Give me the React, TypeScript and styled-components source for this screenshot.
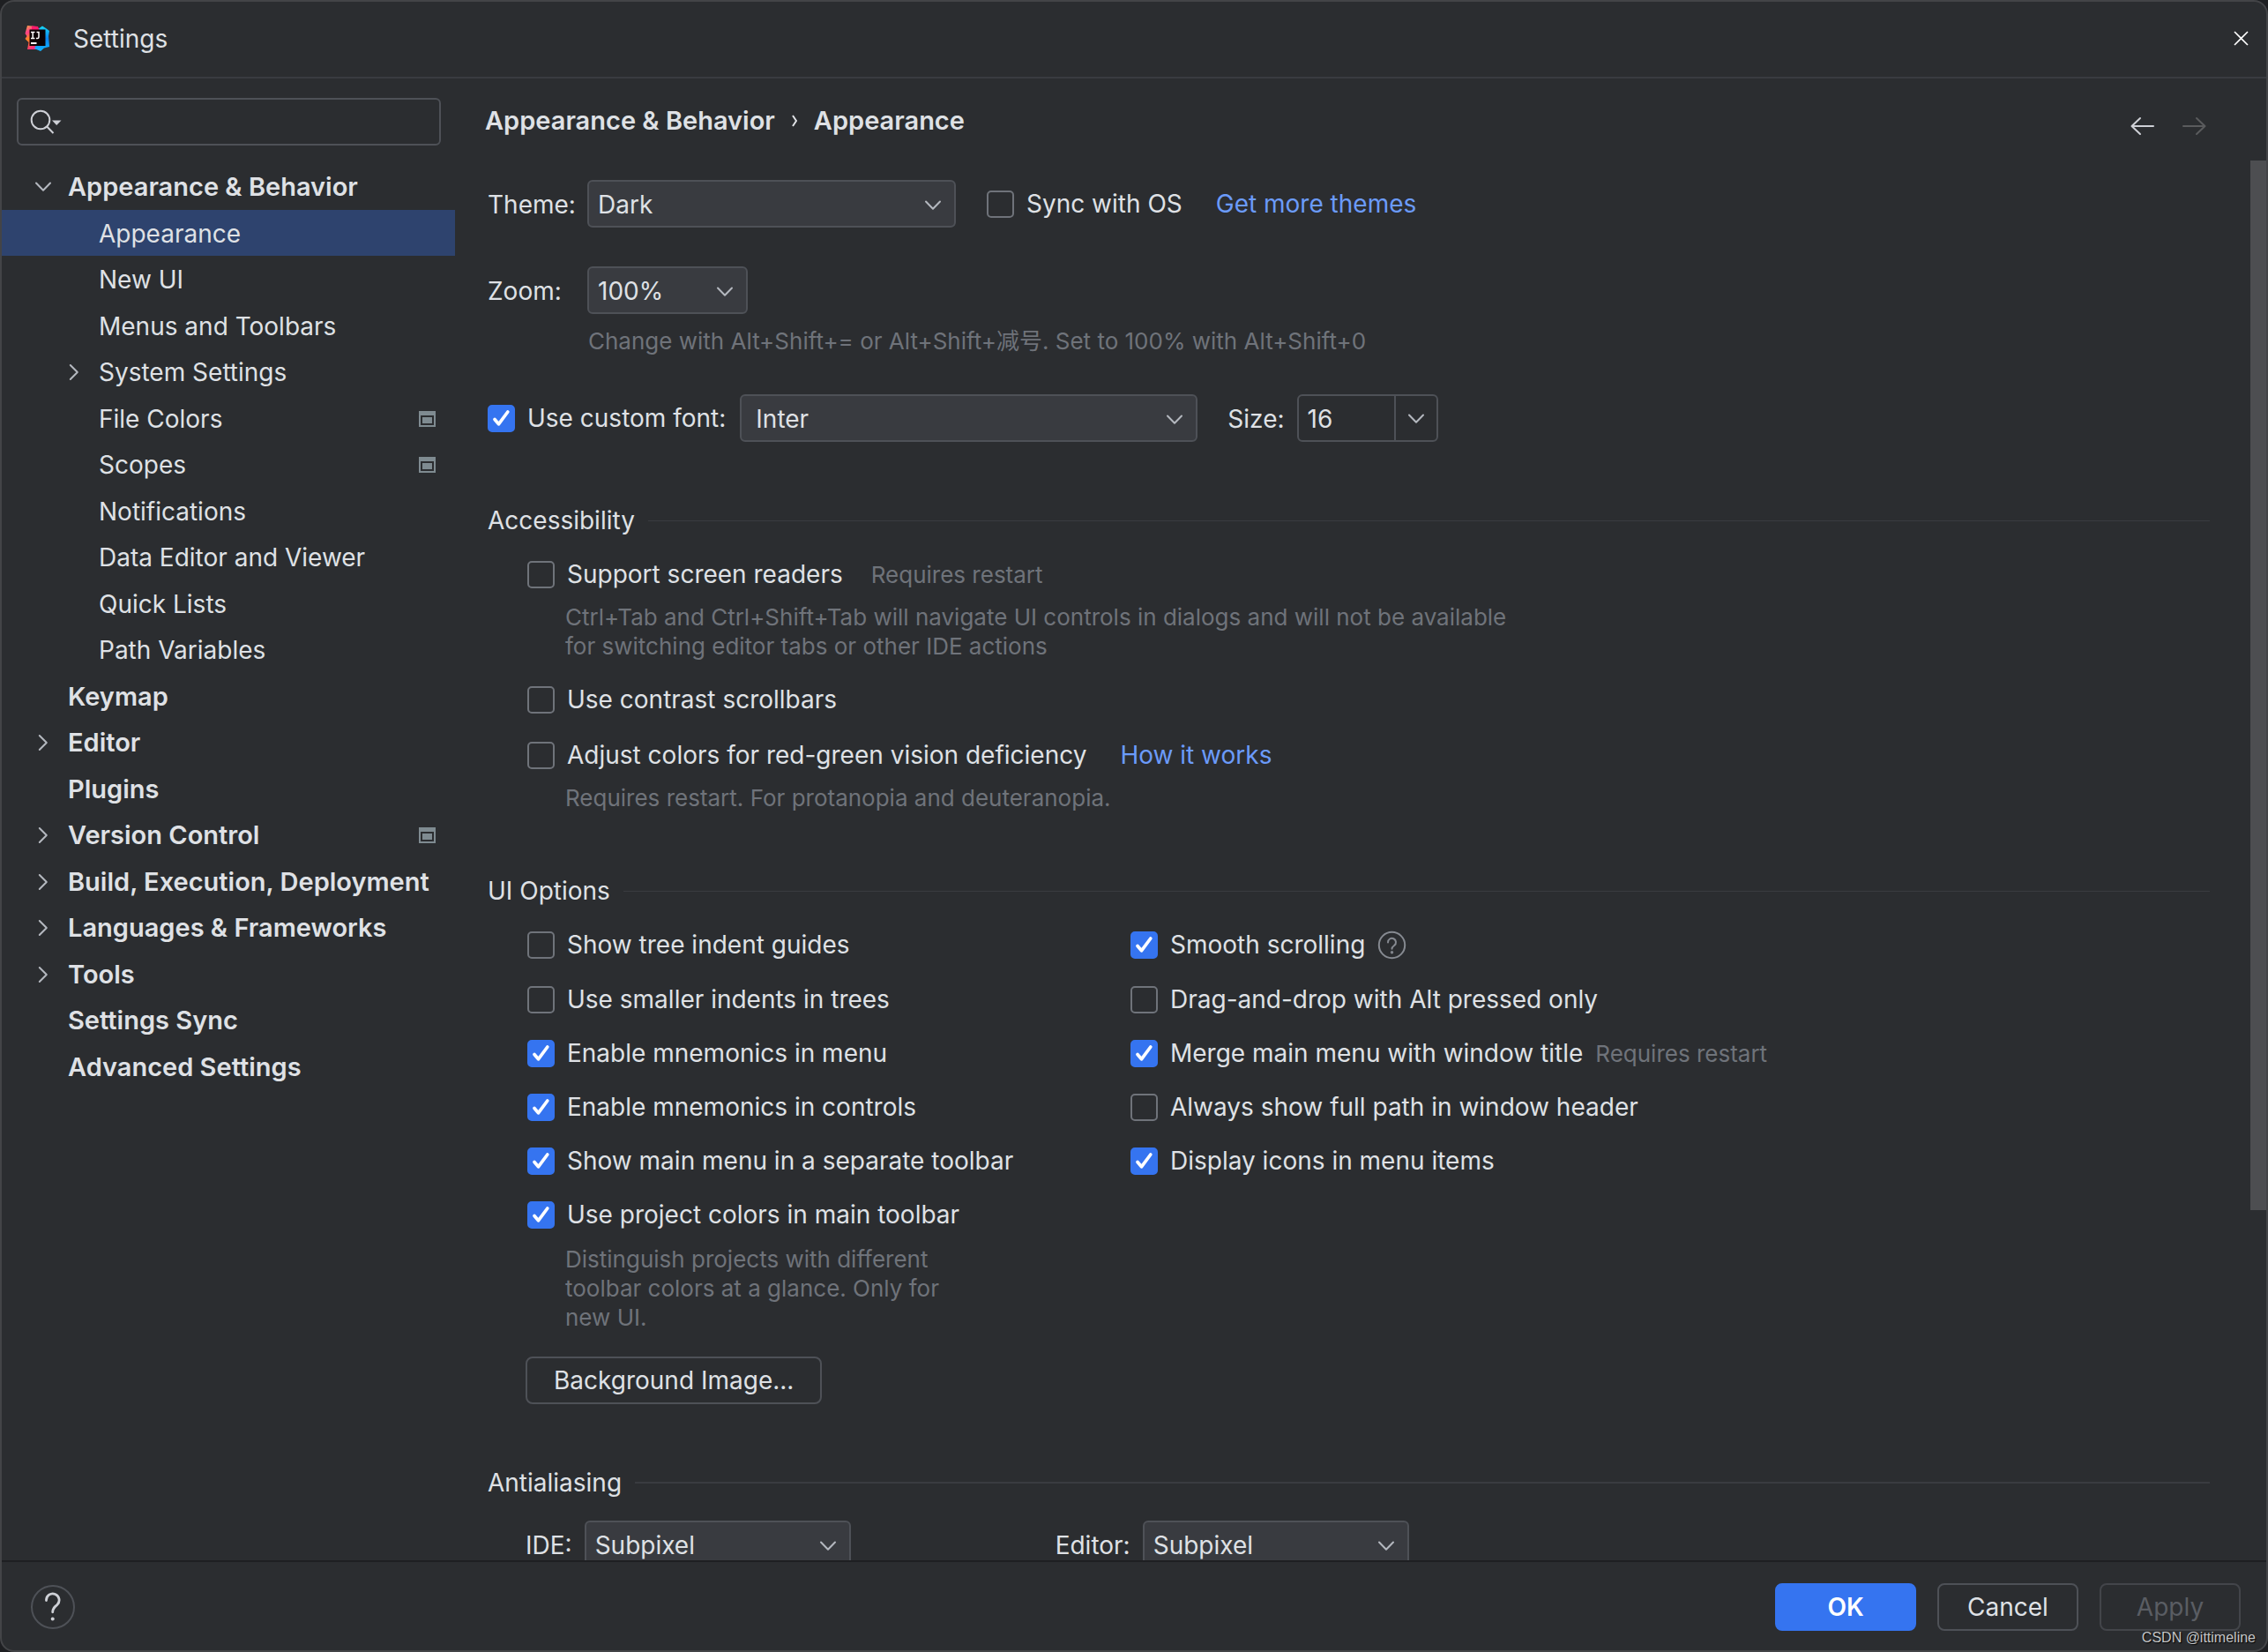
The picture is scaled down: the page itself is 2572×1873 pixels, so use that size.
import React, { useState } from "react";
import styled, { createGlobalStyle, css } from "styled-components";

const c = {
  bg: "#2b2d30",
  field: "#393b40",
  border: "#4e5157",
  frame: "#434447",
  line: "#393b40",
  text: "#dfe1e5",
  hint: "#6f737a",
  icon: "#ced0d6",
  accent: "#3574f0",
  link: "#6b9bfa",
  selected: "#2e436e",
};

const Global = createGlobalStyle`
  *, *::before, *::after { box-sizing: border-box; }
  body { margin: 0; background: #1e1f22; }
  body, button, input, select {
    font-family: Inter, "Noto Sans CJK SC", sans-serif;
    font-size: 28px;
    line-height: 34px;
    font-optical-sizing: none;
    color: ${c.text};
  }
  button, input, select { margin: 0; padding: 0; }
`;

/* ---------- window frame ---------- */

const Window = styled.div`
  display: flex;
  flex-direction: column;
  height: 100vh;
  background: ${c.bg};
  border: 2px solid ${c.frame};
  border-radius: 16px;
  overflow: hidden;
`;

const TitleBar = styled.header`
  display: flex;
  align-items: center;
  flex: none;
  height: 87px;
  padding: 0 20px 2px 26px;
  border-bottom: 2px solid ${c.line};
`;

const Title = styled.h1`
  flex: 1;
  margin: 0 0 0 26px;
  font-size: 28px;
  font-weight: 400;
`;

const IconButton = styled.button`
  display: flex;
  flex: none;
  background: none;
  border: 0;
`;

const Body = styled.div`
  display: flex;
  flex: 1;
  min-height: 0;
`;

/* ---------- sidebar ---------- */

const Sidebar = styled.nav`
  display: flex;
  flex-direction: column;
  flex: none;
  width: 514px;
`;

const SearchBox = styled.div`
  display: flex;
  align-items: center;
  height: 54px;
  margin: 22px 16px 20px 17px;
  padding-left: 13px;
  border: 2px solid ${c.border};
  border-radius: 6px;
`;

const SearchInput = styled.input`
  flex: 1;
  min-width: 0;
  margin-left: 8px;
  background: none;
  border: 0;
  outline: none;
`;

const Tree = styled.ul`
  display: grid;
  grid-auto-rows: 1fr;
  height: 1050px;
  margin: 0;
  padding: 0;
  list-style: none;
`;

const TreeRow = styled.li<{ $child?: boolean; $selected?: boolean }>`
  display: flex;
  align-items: center;
  padding: 2px 22px 0 ${(p) => (p.$child ? 70 : 35)}px;
  font-size: ${(p) => (p.$child ? 28 : 29)}px;
  font-weight: ${(p) => (p.$child ? 400 : 600)};
  background: ${(p) => (p.$selected ? c.selected : "none")};
`;

const TreeArrow = styled.span`
  display: flex;
  justify-content: center;
  width: 24px;
  margin-right: 16px;
`;

const TreeLabel = styled.span`
  flex: 1;
  white-space: nowrap;
`;

/* ---------- content ---------- */

const Content = styled.main`
  display: flex;
  flex-direction: column;
  flex: 1;
  min-width: 0;
`;

const ContentHeader = styled.div`
  display: flex;
  align-items: flex-start;
  flex: none;
  height: 93px;
  padding: 31px 68px 0 34px;
`;

const Breadcrumb = styled.h2`
  display: flex;
  align-items: center;
  flex: 1;
  gap: 18px;
  margin: 0;
  font-size: 29px;
  font-weight: 600;
`;

const NavButtons = styled.div`
  display: flex;
  gap: 30px;
  margin-top: 12px;
`;

const Viewport = styled.div`
  display: flex;
  flex: 1;
  min-height: 0;
  overflow: hidden;
`;

const Page = styled.div`
  flex: 1;
  min-width: 0;
  padding: 22px 46px 0 37px;
`;

const ScrollThumb = styled.div`
  flex: none;
  width: 18px;
  height: 75%;
  background: #4d4e51;
`;

const Row = styled.div<{ $top?: number; $indent?: number }>`
  display: flex;
  align-items: center;
  margin-top: ${(p) => p.$top ?? 0}px;
  padding-left: ${(p) => p.$indent ?? 0}px;
  white-space: nowrap;
`;

const FieldLabel = styled.label<{ $width?: number }>`
  flex: none;
  width: ${(p) => (p.$width ? `${p.$width}px` : "auto")};
  margin-right: ${(p) => (p.$width ? 0 : 14)}px;
  padding-top: 2px;
`;

const Hint = styled.p<{ $indent: number; $max?: number; $top?: number }>`
  max-width: ${(p) => (p.$max ? `${p.$max}px` : "none")};
  margin: ${(p) => p.$top ?? 16}px 0 0 ${(p) => p.$indent}px;
  font-size: 26px;
  line-height: 33px;
  color: ${c.hint};
`;

const InlineHint = styled.span<{ $gap: number }>`
  margin-left: ${(p) => p.$gap}px;
  font-size: 26px;
  line-height: 31px;
  color: ${c.hint};
`;

const Link = styled.a`
  margin-left: 38px;
  line-height: 31px;
  color: ${c.link};
  text-decoration: none;
`;

const SectionTitle = styled.h3<{ $thick?: boolean }>`
  display: flex;
  align-items: center;
  gap: 15px;
  margin: 72px 0 0;
  font-size: 28px;
  font-weight: 400;

  &::after {
    content: "";
    flex: 1;
    height: ${(p) => (p.$thick ? 2 : 1)}px;
    background: ${c.line};
  }
`;

const OptionGrid = styled.div`
  display: grid;
  grid-template-columns: 684px 1fr;
  row-gap: 30px;
  margin-top: 28px;
  padding-left: 45px;
`;

/* ---------- controls ---------- */

const CheckLabel = styled.label`
  display: flex;
  align-items: center;
  gap: 14px;
  line-height: 31px;
`;

const CheckCell = styled.span`
  display: grid;
  flex: none;

  > * {
    grid-area: 1 / 1;
  }
  > svg {
    display: none;
    pointer-events: none;
  }
  > input:checked + svg {
    display: block;
  }
`;

const CheckInput = styled.input`
  appearance: none;
  width: 31px;
  height: 31px;
  border: 2px solid ${c.hint};
  border-radius: 5px;

  &:checked {
    background: ${c.accent};
    border-color: ${c.accent};
  }
`;

const SelectBox = styled.span<{ $width: number }>`
  position: relative;
  display: flex;
  flex: none;
  width: ${(p) => p.$width}px;
`;

const SelectInput = styled.select<{ $pad: number }>`
  appearance: none;
  width: 100%;
  height: 54px;
  padding-top: 2px;
  padding-left: ${(p) => p.$pad}px;
  background: ${c.field};
  border: 2px solid ${c.border};
  border-radius: 6px;
`;

const SelectArrow = styled.span`
  position: absolute;
  top: 23px;
  right: 16px;
  display: flex;
  pointer-events: none;
`;

const ComboBox = styled.span`
  display: flex;
  width: 160px;
  height: 54px;
  border: 2px solid ${c.border};
  border-radius: 6px;
`;

const ComboInput = styled.input`
  flex: 1;
  min-width: 0;
  padding: 2px 0 0 10px;
  background: none;
  border: 0;
`;

const ComboButton = styled.button`
  display: flex;
  align-items: center;
  justify-content: center;
  width: 48px;
  padding-top: 2px;
  background: none;
  border: 0;
  border-left: 2px solid ${c.border};
`;

const Button = styled.button<{ $primary?: boolean; $wide?: boolean }>`
  height: 54px;
  width: ${(p) => (p.$wide ? "auto" : "160px")};
  padding: 0 ${(p) => (p.$wide ? 30 : 0)}px;
  background: none;
  border: 2px solid ${c.border};
  border-radius: 8px;
  white-space: nowrap;

  ${(p) =>
    p.$primary &&
    css`
      background: ${c.accent};
      border-color: ${c.accent};
      color: #fff;
      font-weight: 600;
    `}

  &:disabled {
    color: #5a5d63;
    border-color: #43454a;
  }
`;

/* ---------- footer ---------- */

const Footer = styled.footer`
  position: relative;
  display: flex;
  align-items: center;
  gap: 24px;
  flex: none;
  height: 102px;
  padding: 2px 29px 0 33px;
  border-top: 2px solid #1e1f22;
`;

const HelpButton = styled.button`
  display: flex;
  align-items: center;
  justify-content: center;
  width: 50px;
  height: 50px;
  margin-right: auto;
  background: none;
  border: 2px solid ${c.border};
  border-radius: 50%;
`;

const Watermark = styled.span`
  position: absolute;
  right: 12px;
  bottom: 5px;
  font-family: "Liberation Sans", Arial, sans-serif;
  font-size: 16px;
  line-height: 18px;
  color: #c4c5c6;
  text-shadow: 1px 1px 1px #000;
`;

/* ---------- icons ---------- */

const ChevronDown = () => (
  <svg width="20" height="12" viewBox="0 0 20 12" fill="none" stroke="#b4b8bf" strokeWidth="2" strokeLinecap="round" strokeLinejoin="round">
    <path d="M2 1.5 10 9.8 18 1.5" />
  </svg>
);

const ChevronRight = () => (
  <svg width="12" height="20" viewBox="0 0 12 20" fill="none" stroke="#b4b8bf" strokeWidth="2" strokeLinecap="round" strokeLinejoin="round">
    <path d="M1.8 2 9.8 10 1.8 18" />
  </svg>
);

const Arrow = ({ forward }: { forward?: boolean }) => (
  <svg width="28" height="22" viewBox="0 0 28 22" fill="none" stroke={forward ? "#5a5b5d" : c.icon} strokeWidth="2" strokeLinecap="round" strokeLinejoin="round">
    <path d={forward ? "M2 11H26M17 2 26.500 11 17 20" : "M26 11H2M11 2 1.500 11 11 20"} />
  </svg>
);

const Logo = () => (
  <svg width="29" height="29" viewBox="0 0 29 29" aria-hidden="true">
    <defs>
      <linearGradient id="warm" x1="0" y1="0" x2="0.4" y2="1">
        <stop offset="0" stopColor="#ffb13d" />
        <stop offset="0.3" stopColor="#ff3d8b" />
        <stop offset="0.55" stopColor="#ff8a1f" />
        <stop offset="1" stopColor="#f9287e" />
      </linearGradient>
      <linearGradient id="cool" x1="0" y1="0" x2="0" y2="1">
        <stop offset="0" stopColor="#18d6f5" />
        <stop offset="0.5" stopColor="#0a84f0" />
        <stop offset="1" stopColor="#12b4ff" />
      </linearGradient>
    </defs>
    <path d="M3 0 13 1 18 5 17 26 12 27 3 27 4.500 19 0.500 15 2.500 12 0.500 9Z" fill="url(#warm)" />
    <path d="M15 4 20 0.500 24 3 28 6 27 12 28 24 22 25.500 18 29 11 26 17 15Z" fill="url(#cool)" />
    <path d="M8 0.500 15 1 17 6 8 7Z" fill="#fb1a6c" />
    <rect x="5.500" y="4.500" width="18" height="18.500" fill="#0b0204" />
    <path d="M7 7.500h4.500M7 14.500h4.500M9.200 7.500v7M13.500 7.500h2.500v5.500q0 1.500-1.500 1.500h-1.500" fill="none" stroke="#fff" strokeWidth="1.500" />
    <rect x="7" y="19" width="6.500" height="2" fill="#fff" />
  </svg>
);

const ProjectIcon = () => (
  <svg width="19" height="18" viewBox="0 0 19 18" aria-label="For current project">
    <path d="M0 0h19v18H0zM2 5v11h15V5z" fill="#7f8b91" fillRule="evenodd" />
    <path d="M4 7h11v7H4z" fill="#7f8b91" />
  </svg>
);

const SearchIcon = () => (
  <svg width="38" height="30" viewBox="0 0 38 30" fill="none" aria-hidden="true">
    <circle cx="12" cy="13" r="10.300" stroke={c.icon} strokeWidth="2" />
    <path d="M19.200 20.500 26.500 28" stroke={c.icon} strokeWidth="2" />
    <path d="M25 13.500h10.500L30.200 19Z" fill={c.icon} />
  </svg>
);

const HelpIcon = () => (
  <svg width="33" height="33" viewBox="0 0 33 33" fill="none" stroke="#868a91" strokeWidth="2" strokeLinecap="round">
    <circle cx="16.500" cy="16.500" r="14.700" />
    <path d="M12 13.400a4.500 4.500 0 1 1 7.200 3.500c-1.700 1.300-2.700 2-2.700 3.900" />
    <circle cx="16.500" cy="24.800" r="0.700" />
  </svg>
);

const QuestionIcon = () => (
  <svg width="22" height="34" viewBox="0 0 22 34" fill="none" stroke={c.icon} strokeWidth="2.800" strokeLinecap="round">
    <path d="M3.500 9.500A7.300 7.300 0 1 1 15.800 14.500C12.800 17 10.700 18.500 10.700 22.800" />
    <circle cx="10.700" cy="30.500" r="2" fill={c.icon} stroke="none" />
  </svg>
);

const CloseIcon = () => (
  <svg width="17" height="17" viewBox="0 0 17 17" stroke="#fff" strokeWidth="1.600">
    <path d="M1 1 16 16M16 1 1 16" />
  </svg>
);

/* ---------- parts ---------- */

type CheckProps = { label: string; on?: boolean };

const Check = ({ label, on = false }: CheckProps) => {
  const [checked, setChecked] = useState(on);
  return (
    <CheckLabel>
      <CheckCell>
        <CheckInput type="checkbox" checked={checked} onChange={() => setChecked(!checked)} />
        <svg width="31" height="31" viewBox="0 0 31 31" fill="none" stroke="#fff" strokeWidth="3.700" strokeLinecap="round" strokeLinejoin="round">
          <path d="M8 16.500 12.500 21.800 22.800 8" />
        </svg>
      </CheckCell>
      {label}
    </CheckLabel>
  );
};

type DropProps = { id: string; width: number; options: string[]; pad?: number; label?: string };

const Drop = ({ id, width, options, pad = 10, label }: DropProps) => (
  <SelectBox $width={width}>
    <SelectInput id={id} $pad={pad} aria-label={label}>
      {options.map((o) => (
        <option key={o}>{o}</option>
      ))}
    </SelectInput>
    <SelectArrow>
      <ChevronDown />
    </SelectArrow>
  </SelectBox>
);

type Item = { name: string; child?: boolean; arrow?: "down" | "right"; project?: boolean; selected?: boolean };

const tree: Item[] = [
  { name: "Appearance & Behavior", arrow: "down" },
  { name: "Appearance", child: true, selected: true },
  { name: "New UI", child: true },
  { name: "Menus and Toolbars", child: true },
  { name: "System Settings", child: true, arrow: "right" },
  { name: "File Colors", child: true, project: true },
  { name: "Scopes", child: true, project: true },
  { name: "Notifications", child: true },
  { name: "Data Editor and Viewer", child: true },
  { name: "Quick Lists", child: true },
  { name: "Path Variables", child: true },
  { name: "Keymap" },
  { name: "Editor", arrow: "right" },
  { name: "Plugins" },
  { name: "Version Control", arrow: "right", project: true },
  { name: "Build, Execution, Deployment", arrow: "right" },
  { name: "Languages & Frameworks", arrow: "right" },
  { name: "Tools", arrow: "right" },
  { name: "Settings Sync" },
  { name: "Advanced Settings" },
];

export default function App() {
  return (
    <>
      <Global />
      <Window>
        <TitleBar>
          <Logo />
          <Title>Settings</Title>
          <IconButton aria-label="Close">
            <CloseIcon />
          </IconButton>
        </TitleBar>
        <Body>
          <Sidebar>
            <SearchBox>
              <SearchIcon />
              <SearchInput type="text" aria-label="Search settings" />
            </SearchBox>
            <Tree>
              {tree.map((t) => (
                <TreeRow key={t.name} $child={t.child} $selected={t.selected}>
                  <TreeArrow>
                    {t.arrow === "down" && <ChevronDown />}
                    {t.arrow === "right" && <ChevronRight />}
                  </TreeArrow>
                  <TreeLabel>{t.name}</TreeLabel>
                  {t.project && <ProjectIcon />}
                </TreeRow>
              ))}
            </Tree>
          </Sidebar>
          <Content>
            <ContentHeader>
              <Breadcrumb>
                <span>Appearance &amp; Behavior</span>
                <svg width="8" height="16" viewBox="0 0 8 16" fill="none" stroke={c.text} strokeWidth="2">
                  <path d="M2 2 6 8 2 14" />
                </svg>
                <span>Appearance</span>
              </Breadcrumb>
              <NavButtons>
                <IconButton aria-label="Back">
                  <Arrow />
                </IconButton>
                <IconButton aria-label="Forward" disabled>
                  <Arrow forward />
                </IconButton>
              </NavButtons>
            </ContentHeader>
            <Viewport>
              <Page>
                <Row>
                  <FieldLabel htmlFor="theme" $width={113}>Theme:</FieldLabel>
                  <Drop id="theme" width={418} options={["Dark", "Light"]} />
                  <Row $indent={35}>
                    <Check label="Sync with OS" />
                    <Link href="#themes">Get more themes</Link>
                  </Row>
                </Row>
                <Row $top={44}>
                  <FieldLabel htmlFor="zoom" $width={113}>Zoom:</FieldLabel>
                  <Drop id="zoom" width={182} options={["100%", "125%"]} />
                </Row>
                <Hint $indent={114} $top={14}>
                  Change with Alt+Shift+= or Alt+Shift+减号. Set to 100% with Alt+Shift+0
                </Hint>
                <Row $top={44}>
                  <Check label="Use custom font:" on />
                  <Row $indent={16}>
                    <Drop id="font" width={519} options={["Inter"]} pad={16} label="Custom font" />
                  </Row>
                  <Row $indent={34}>
                    <FieldLabel htmlFor="size">Size:</FieldLabel>
                    <ComboBox>
                      <ComboInput id="size" type="text" defaultValue="16" />
                      <ComboButton aria-label="Choose size">
                        <ChevronDown />
                      </ComboButton>
                    </ComboBox>
                  </Row>
                </Row>

                <SectionTitle>Accessibility</SectionTitle>
                <Row $top={29} $indent={45}>
                  <Check label="Support screen readers" />
                  <InlineHint $gap={32}>Requires restart</InlineHint>
                </Row>
                <Hint $indent={88} $max={1090}>
                  Ctrl+Tab and Ctrl+Shift+Tab will navigate UI controls in dialogs and will not be available
                  for switching editor tabs or other IDE actions
                </Hint>
                <Row $top={29} $indent={45}>
                  <Check label="Use contrast scrollbars" />
                </Row>
                <Row $top={32} $indent={45}>
                  <Check label="Adjust colors for red-green vision deficiency" />
                  <Link href="#how">How it works</Link>
                </Row>
                <Hint $indent={88}>Requires restart. For protanopia and deuteranopia.</Hint>

                <SectionTitle>UI Options</SectionTitle>
                <OptionGrid>
                  <Check label="Show tree indent guides" />
                  <Row>
                    <Check label="Smooth scrolling" on />
                    <Row $indent={14}>
                      <IconButton aria-label="About smooth scrolling">
                        <HelpIcon />
                      </IconButton>
                    </Row>
                  </Row>
                  <Check label="Use smaller indents in trees" />
                  <Check label="Drag-and-drop with Alt pressed only" />
                  <Check label="Enable mnemonics in menu" on />
                  <Row>
                    <Check label="Merge main menu with window title" on />
                    <InlineHint $gap={14}>Requires restart</InlineHint>
                  </Row>
                  <Check label="Enable mnemonics in controls" on />
                  <Check label="Always show full path in window header" />
                  <Check label="Show main menu in a separate toolbar" on />
                  <Check label="Display icons in menu items" on />
                  <Check label="Use project colors in main toolbar" on />
                </OptionGrid>
                <Hint $indent={88} $max={450} $top={18}>
                  Distinguish projects with different toolbar colors at a glance. Only for new UI.
                </Hint>
                <Row $top={28} $indent={43}>
                  <Button $wide>Background Image...</Button>
                </Row>

                <SectionTitle $thick>Antialiasing</SectionTitle>
                <Row $top={26} $indent={43}>
                  <FieldLabel htmlFor="aa-ide">IDE:</FieldLabel>
                  <Drop id="aa-ide" width={302} options={["Subpixel", "Greyscale"]} />
                  <Row $indent={232}>
                    <FieldLabel htmlFor="aa-editor">Editor:</FieldLabel>
                    <Drop id="aa-editor" width={302} options={["Subpixel", "Greyscale"]} />
                  </Row>
                </Row>
              </Page>
              <ScrollThumb />
            </Viewport>
          </Content>
        </Body>
        <Footer>
          <HelpButton aria-label="Help">
            <QuestionIcon />
          </HelpButton>
          <Button $primary>OK</Button>
          <Button>Cancel</Button>
          <Button disabled>Apply</Button>
          <Watermark>CSDN @ittimeline</Watermark>
        </Footer>
      </Window>
    </>
  );
}
